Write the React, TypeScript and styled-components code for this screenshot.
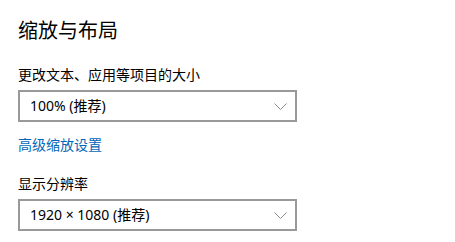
import React from "react";
import styled, { createGlobalStyle } from "styled-components";

const GlobalStyle = createGlobalStyle`
  html, body {
    margin: 0;
    padding: 0;
    background: #ffffff;
  }
  body {
    font-family: "Noto Sans", "Noto Sans CJK SC", sans-serif;
    color: #000000;
  }
`;

const Page = styled.div`
  display: flex;
  flex-direction: column;
  padding: 16px 18px 0 18px;
  width: 455px;
  height: 242px;
  box-sizing: border-box;
`;

const Title = styled.h2`
  margin: 0;
  font-size: 20px;
  font-weight: 400;
  line-height: 28px;
  font-family: "Noto Sans CJK SC", sans-serif;
`;

const Label = styled.div<{ $top: number }>`
  margin-top: ${(p) => p.$top}px;
  font-size: 14px;
  line-height: 20px;
  font-family: "Noto Sans CJK SC", sans-serif;
`;

const Select = styled.div`
  display: flex;
  align-items: center;
  justify-content: space-between;
  margin-top: 6px;
  width: 279px;
  height: 32px;
  box-sizing: border-box;
  border: 2px solid #999999;
  padding: 0 8px 0 10px;
  font-size: 14px;
  font-family: "Noto Sans", "Noto Sans CJK SC", sans-serif;
`;

const Value = styled.span`
  line-height: 20px;
`;

const Chevron = styled.svg`
  width: 13px;
  height: 7px;
`;

const Link = styled.a`
  margin-top: 12px;
  font-size: 14px;
  line-height: 20px;
  color: #0067b8;
  text-decoration: none;
  font-family: "Noto Sans CJK SC", sans-serif;
`;

const Dropdown = ({ value }: { value: string }) => (
  <Select>
    <Value>{value}</Value>
    <Chevron viewBox="0 0 13 7">
      <path d="M0.5 0.5 L6.5 6.5 L12.5 0.5" fill="none" stroke="#8c8c8c" strokeWidth="1" />
    </Chevron>
  </Select>
);

export default function App() {
  return (
    <>
      <GlobalStyle />
      <Page>
        <Title>缩放与布局</Title>
        <Label $top={20}>更改文本、应用等项目的大小</Label>
        <Dropdown value="100% (推荐)" />
        <Link href="#">高级缩放设置</Link>
        <Label $top={19}>显示分辨率</Label>
        <Dropdown value="1920 × 1080 (推荐)" />
      </Page>
    </>
  );
}
